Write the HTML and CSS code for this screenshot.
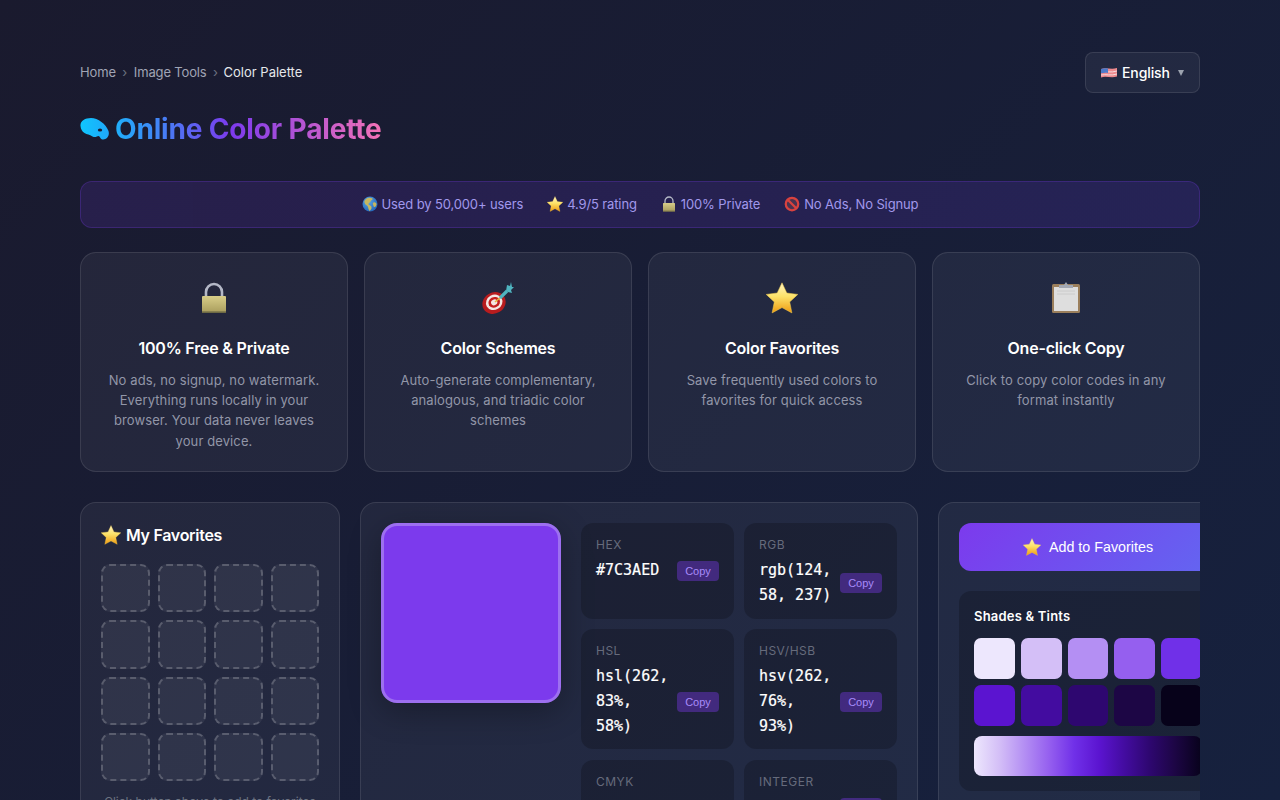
FILE: index.html
```html
<!DOCTYPE html>
<html lang="en">
<head>
<meta charset="utf-8">
<title>Online Color Palette</title>
<link rel="stylesheet" href="styles.css">
</head>
<body>
<svg class="defs" width="0" height="0" aria-hidden="true">
  <defs>
    <linearGradient id="starFill" x1="0" y1="0" x2="0" y2="1">
      <stop offset="0" stop-color="#fff3c0"/><stop offset="0.45" stop-color="#fde36a"/><stop offset="1" stop-color="#ef9a10"/>
    </linearGradient>
    <linearGradient id="lockFill" x1="0" y1="0" x2="0" y2="1">
      <stop offset="0" stop-color="#d8cd88"/><stop offset="1" stop-color="#a89c5c"/>
    </linearGradient>
    <linearGradient id="palFill" x1="0" y1="0" x2="1" y2="0">
      <stop offset="0" stop-color="#0fc6fd"/><stop offset="1" stop-color="#20a8fa"/>
    </linearGradient>
    <radialGradient id="globeFill" cx=".4" cy=".35" r=".75">
      <stop offset="0" stop-color="#5aa8e8"/><stop offset="1" stop-color="#1d5fb4"/>
    </radialGradient>
    <symbol id="star" viewBox="0 0 32 32">
      <path d="M16 .8l4.800 10.200 11 1.400-8.100 7.500 2.200 11L16 25.600 6.100 30.900l2.200-11L.2 12.400l11-1.400z" fill="url(#starFill)" stroke="#f7d050" stroke-width=".5" stroke-linejoin="round"/>
    </symbol>
    <symbol id="lock" viewBox="0 0 32 32">
      <path d="M8 15V10a8 8 0 0 1 16 0v5" fill="none" stroke="#b4b8c6" stroke-width="2.600"/>
      <rect x="4" y="14" width="24" height="17" rx="1" fill="url(#lockFill)"/>
      <rect x="4" y="29.400" width="24" height="1.600" fill="#6e6a45"/>
    </symbol>
    <symbol id="globe" viewBox="0 0 32 32">
      <circle cx="16" cy="16" r="15" fill="url(#globeFill)"/>
      <path d="M8 6c4-3 10-3 13-1 1 3-3 3-4 6s-4 2-4 5 5 2 6 6-3 7-4 8c-3-4-2-8-4-10s-5-3-6-7 1-5 3-7zM23 13c3-1 5 1 6 3 0 3-2 6-4 6s-2-3-3-5 0-3 1-4z" fill="#c6b760"/>
    </symbol>
    <symbol id="noentry" viewBox="0 0 32 32">
      <circle cx="16" cy="16" r="12.500" fill="#4a3350" stroke="#d9423f" stroke-width="4.500"/>
      <path d="M7 7l18 18" stroke="#d9423f" stroke-width="4.500"/>
    </symbol>
    <symbol id="dart" viewBox="0 0 32 32">
      <ellipse cx="12" cy="21" rx="12" ry="10.500" transform="rotate(-30 12 21)" fill="#b81c1e"/>
      <ellipse cx="12.500" cy="20.500" rx="8.500" ry="7.500" transform="rotate(-30 12 21)" fill="#f4e6e2"/>
      <ellipse cx="12.500" cy="20.500" rx="6" ry="5.200" transform="rotate(-30 12 21)" fill="#c5201f"/>
      <ellipse cx="12.500" cy="20.500" rx="3.200" ry="2.800" transform="rotate(-30 12 21)" fill="#f4e6e2"/>
      <path d="M13 20l6-5" stroke="#e3b53c" stroke-width="1.600"/>
      <path d="M18 16l7-7" stroke="#4fb4c0" stroke-width="3.200"/>
      <path d="M24 9l1-6 3 1 1-4 1 5 2 0-3 3 1 3-4-1z" fill="#4fb4c0"/>
    </symbol>
    <symbol id="clip" viewBox="0 0 32 32">
      <rect x="2" y="2" width="28" height="29" rx="1.500" fill="#9b7f5c"/>
      <rect x="4" y="5" width="24" height="24" fill="#dedede"/>
      <path d="M9 3h5l2-3 2 3h5v3H9z" fill="#a3a8b3"/>
      <path d="M7 9h18M7 12h18" stroke="#c6c6c6" stroke-width=".8"/>
    </symbol>
    <symbol id="flag" viewBox="0 0 16 11">
      <path d="M0 2c5-2 10 1 16-1v8.500c-6 2-11-1-16 1z" fill="#ee8a8e"/>
      <path d="M0 5c5-1 10 1 16-1M0 8c5-1 10 1 16-1" stroke="#f6dadd" stroke-width="1" fill="none"/>
      <path d="M0 2c3-1 5-.8 7-.4V6c-2-.5-4-.4-7 .3z" fill="#4d79c9"/>
    </symbol>
    <symbol id="palette" viewBox="0 0 29 22">
      <path d="M.5 8C0 3 5 0 11 0c7 0 15 6 17.500 13 1.500 5-2 9-6 8.500-2.500-.5-2.500-3.500-4-3.500s-3 2-6 .5c-3-2-5.500-2-8-3.500C2 13.500.8 11 .5 8z" fill="url(#palFill)"/>
      <ellipse cx="20" cy="12" rx="2.200" ry="1.500" fill="#1a1c32"/>
    </symbol>
  </defs>
</svg>
<div class="page">
  <header class="topbar">
    <nav class="crumbs">
      <a class="crumb">Home</a><span class="sep">›</span><a class="crumb">Image Tools</a><span class="sep">›</span><span class="crumb-current">Color Palette</span>
    </nav>
    <button class="lang"><svg class="flag"><use href="#flag"/></svg><span>English</span><i class="caret"></i></button>
  </header>

  <h1 class="title"><svg class="title-icon"><use href="#palette"/></svg><span class="title-text">Online Color Palette</span></h1>

  <div class="trust">
    <span class="trust-item"><svg class="ico16"><use href="#globe"/></svg>Used by 50,000+ users</span>
    <span class="trust-item"><svg class="ico16"><use href="#star"/></svg>4.9/5 rating</span>
    <span class="trust-item"><svg class="ico16"><use href="#lock"/></svg>100% Private</span>
    <span class="trust-item"><svg class="ico16"><use href="#noentry"/></svg>No Ads, No Signup</span>
  </div>

  <section class="features">
    <article class="feature"><svg class="feature-icon"><use href="#lock"/></svg><h3>100% Free &amp; Private</h3><p>No ads, no signup, no watermark. Everything runs locally in your browser. Your data never leaves your device.</p></article>
    <article class="feature"><svg class="feature-icon"><use href="#dart"/></svg><h3>Color Schemes</h3><p>Auto-generate complementary, analogous, and triadic color schemes</p></article>
    <article class="feature"><svg class="feature-icon"><use href="#star"/></svg><h3>Color Favorites</h3><p>Save frequently used colors to favorites for quick access</p></article>
    <article class="feature"><svg class="feature-icon"><use href="#clip"/></svg><h3>One-click Copy</h3><p>Click to copy color codes in any format instantly</p></article>
  </section>

  <section class="tool">
    <aside class="panel favs">
      <h3 class="fav-title"><svg class="ico20"><use href="#star"/></svg>My Favorites</h3>
      <div class="fav-grid">
        <div class="slot"></div><div class="slot"></div><div class="slot"></div><div class="slot"></div>
        <div class="slot"></div><div class="slot"></div><div class="slot"></div><div class="slot"></div>
        <div class="slot"></div><div class="slot"></div><div class="slot"></div><div class="slot"></div>
        <div class="slot"></div><div class="slot"></div><div class="slot"></div><div class="slot"></div>
      </div>
      <p class="fav-hint">Click button above to add to favorites</p>
    </aside>

    <main class="panel picker">
      <div class="swatch"></div>
      <div class="codes">
        <div class="code"><label>HEX</label><div class="code-row"><div class="val">#7C3AED</div><button class="copy">Copy</button></div></div>
        <div class="code"><label>RGB</label><div class="code-row"><div class="val">rgb(124, 58, 237)</div><button class="copy">Copy</button></div></div>
        <div class="code"><label>HSL</label><div class="code-row"><div class="val">hsl(262, 83%, 58%)</div><button class="copy">Copy</button></div></div>
        <div class="code"><label>HSV/HSB</label><div class="code-row"><div class="val">hsv(262, 76%, 93%)</div><button class="copy">Copy</button></div></div>
        <div class="code"><label>CMYK</label><div class="code-row"><div class="val">48%, 76%, 0%, 7%</div><button class="copy">Copy</button></div></div>
        <div class="code"><label>INTEGER</label><div class="code-row"><div class="val">8141549</div><button class="copy">Copy</button></div></div>
      </div>
    </main>

    <div class="panel side">
      <button class="add"><svg class="ico18"><use href="#star"/></svg>Add to Favorites</button>
      <div class="shades">
        <h4>Shades &amp; Tints</h4>
        <div class="shade-grid">
          <div class="shade s1"></div><div class="shade s2"></div><div class="shade s3"></div><div class="shade s4"></div><div class="shade s5"></div>
          <div class="shade s6"></div><div class="shade s7"></div><div class="shade s8"></div><div class="shade s9"></div><div class="shade s10"></div>
        </div>
        <div class="ramp"></div>
      </div>
    </div>
  </section>
</div>
</body>
</html>
```
FILE: styles.css
```css
* { box-sizing: border-box; }
html, body { margin: 0; height: 800px; overflow: hidden; }
body {
  background: linear-gradient(135deg, #1a1a2e 0%, #16213e 100%);
  font-family: Inter, "Liberation Sans", sans-serif;
  color: #fff;
}
.defs { position: absolute; }
.page { width: 1120px; margin: 0 auto; padding-top: 52px; }

.topbar { display: flex; justify-content: space-between; align-items: center; height: 41px; }
.crumbs { display: flex; align-items: center; padding-bottom: 2px; font-size: 13px; color: #9ca3af; }
.crumb { color: #a0a4b4; letter-spacing: -.15px; }
.sep { margin: 0 6.5px; color: #6b7280; }
.crumb-current { margin-left: -1px; color: #e5e7eb; }
.lang {
  display: flex; align-items: center;
  width: 115px; height: 41px; padding: 0 15px;
  background: rgba(255,255,255,.05); border: 1px solid rgba(255,255,255,.1); border-radius: 8px;
  color: #fff; font: 500 14px Inter, sans-serif; letter-spacing: -.1px;
}
.flag { flex: none; width: 16px; height: 11px; margin-right: 5px; }
.caret { flex: none; width: 0; height: 0; margin-left: 8px; border-left: 3.5px solid transparent; border-right: 3.5px solid transparent; border-top: 6px solid #9ca3af; }

.title { display: flex; align-items: center; gap: 6px; margin: 16px 0 32px; height: 40px; font-size: 28px; font-weight: 700; letter-spacing: -.16px; }
.title-icon { flex: none; width: 29px; height: 22px; }
.title-text {
  background: linear-gradient(90deg, #1fb0fb 0%, #7c3aed 43.4%, #f472b6 100%);
  -webkit-background-clip: text; background-clip: text; color: transparent;
}

.trust {
  display: flex; justify-content: center; align-items: center; gap: 24px;
  height: 47px; padding-bottom: 2px;
  background: linear-gradient(90deg, rgba(124,58,237,.14), rgba(110,58,237,.16));
  border: 1px solid rgba(124,58,237,.25); border-radius: 12px;
  font-size: 13px; letter-spacing: -.13px; color: #a198ec;
}
.trust-item { display: flex; align-items: center; gap: 4px; }
.ico16 { flex: none; width: 16px; height: 16px; }
.ico18 { flex: none; width: 18px; height: 18px; }
.ico20 { flex: none; width: 20px; height: 20px; }

.features { display: grid; grid-template-columns: repeat(4, 1fr); gap: 16px; margin-top: 24px; }
.feature {
  height: 220px; padding: 29px 24px 0; text-align: center;
  background: rgba(255,255,255,.05); border: 1px solid rgba(255,255,255,.1); border-radius: 16px;
}
.feature-icon { display: block; width: 32px; height: 32px; margin: 0 auto 23px; }
.feature h3 { margin: 0 0 11px; font-size: 16px; font-weight: 600; line-height: 22px; letter-spacing: -.2px; }
.feature p { margin: 0; font-size: 13px; line-height: 20.2px; letter-spacing: .11px; color: #9296a8; }

.tool { display: flex; gap: 20px; margin-top: 30px; overflow: hidden; align-items: flex-start; }
.panel { flex: none; background: rgba(255,255,255,.05); border: 1px solid rgba(255,255,255,.1); border-radius: 16px; padding: 20px; }
.favs { width: 260px; height: 420px; }
.fav-title { display: flex; align-items: center; gap: 5px; margin: 0 0 17px; font-size: 16px; font-weight: 600; line-height: 24px; letter-spacing: -.3px; }
.fav-grid { display: grid; grid-template-columns: repeat(4, 1fr); gap: 8px; }
.slot { height: 48.3px; background: rgba(255,255,255,.06); border: 2px dashed rgba(255,255,255,.2); border-radius: 9px; }
.fav-hint { margin: 13px 0 0; font-size: 12px; color: #6b7280; text-align: center; white-space: nowrap; }

.picker { width: 558px; display: flex; gap: 20px; align-items: flex-start; }
.swatch { flex: none; width: 180px; height: 180px; background: #7c3aed; border: 3px solid #9d6ff0; border-radius: 16px; box-shadow: 0 8px 32px rgba(0,0,0,.3); }
.codes { flex: 1; display: grid; grid-template-columns: 1fr 1fr; gap: 10.5px 10px; }
.code { padding: 13px 15px 11px; background: rgba(0,0,0,.2); border-radius: 12px; }
.code label { display: block; margin-bottom: 4px; font-size: 12px; line-height: 18px; letter-spacing: .5px; color: #666b7c; }
.code-row { display: flex; align-items: center; justify-content: space-between; gap: 8px; }
.val { flex: 1; min-width: 0; font-family: "DejaVu Sans Mono", "Liberation Mono", monospace; font-size: 15px; font-weight: 500; line-height: 24.75px; color: #fff; -webkit-text-stroke: .2px #fff; }
.copy { flex: none; width: 42px; height: 20px; margin-top: 1px; padding: 0; background: rgba(124,58,237,.4); border: 0; border-radius: 4px; color: #a78bfa; font: 11px "Liberation Sans", sans-serif; }

.side { width: 300px; height: 400px; }
.add { display: flex; align-items: center; justify-content: center; gap: 8px; width: 258px; height: 48px; background: linear-gradient(135deg, #7c3aed, #6366f1); border: 0; border-radius: 12px; color: #fff; font: 14.3px "Liberation Sans", sans-serif; }
.shades { width: 258px; margin-top: 20px; padding: 15px; background: rgba(0,0,0,.2); border-radius: 12px; }
.shades h4 { margin: 0 0 12px; font-size: 13px; font-weight: 600; line-height: 20px; letter-spacing: .2px; }
.shade-grid { display: grid; grid-template-columns: repeat(5, 1fr); gap: 6px; }
.shade { height: 41px; border-radius: 7px; }
.s1 { background: #ede7fd; } .s2 { background: #d4bff7; } .s3 { background: #b48ff3; } .s4 { background: #955fef; } .s5 { background: #7030e8; }
.s6 { background: #5b14d0; } .s7 { background: #430ca0; } .s8 { background: #2e0770; } .s9 { background: #1d0645; } .s10 { background: #07021a; }
.ramp { height: 40px; margin-top: 10px; border-radius: 8px; background: linear-gradient(90deg, #ede7fd 0%, #d4bff7 11%, #b48ff3 22%, #955fef 33%, #7030e8 44%, #5b14d0 55%, #430ca0 66%, #2e0770 77%, #1d0645 88%, #07021a 100%); }
```
